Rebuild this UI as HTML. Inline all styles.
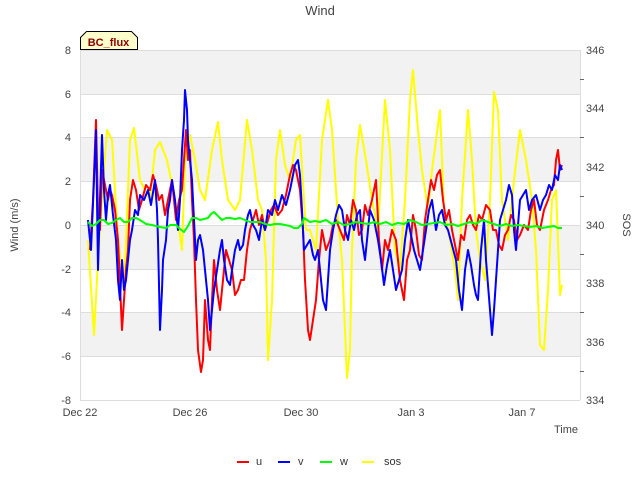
<!DOCTYPE html>
<html><head><meta charset="utf-8"><style>
body{margin:0;background:#fff;}
svg{display:block;font-family:"Liberation Sans","DejaVu Sans",sans-serif;}
</style></head><body>
<svg width="640" height="480" viewBox="0 0 640 480" xmlns="http://www.w3.org/2000/svg">
<rect width="640" height="480" fill="#fff"/>
<text x="320" y="15" font-size="13" fill="#444" text-anchor="middle">Wind</text>
<!-- bands -->
<rect x="80" y="50" width="500" height="44" fill="#f2f2f2"/>
<rect x="80" y="137" width="500" height="44" fill="#f2f2f2"/>
<rect x="80" y="225" width="500" height="44" fill="#f2f2f2"/>
<rect x="80" y="312" width="500" height="44" fill="#f2f2f2"/>
<g stroke="#ddd" stroke-width="1">
<line x1="80" y1="50.5" x2="580" y2="50.5"/><line x1="80" y1="94.5" x2="580" y2="94.5"/>
<line x1="80" y1="137.5" x2="580" y2="137.5"/><line x1="80" y1="181.5" x2="580" y2="181.5"/>
<line x1="80" y1="225.5" x2="580" y2="225.5"/><line x1="80" y1="269.5" x2="580" y2="269.5"/>
<line x1="80" y1="312.5" x2="580" y2="312.5"/><line x1="80" y1="356.5" x2="580" y2="356.5"/>
<line x1="80.5" y1="50" x2="80.5" y2="400"/><line x1="580.5" y1="50" x2="580.5" y2="400"/>
<line x1="80" y1="400.5" x2="580" y2="400.5"/>
</g>
<g font-size="11" fill="#444" text-anchor="end">
<text x="71" y="54">8</text><text x="71" y="98">6</text><text x="71" y="141">4</text><text x="71" y="185">2</text>
<text x="71" y="229">0</text><text x="71" y="273">-2</text><text x="71" y="316">-4</text><text x="71" y="360">-6</text><text x="71" y="404">-8</text>
</g>
<g font-size="11" fill="#444">
<text x="586" y="54">346</text><text x="586" y="112">344</text><text x="586" y="171">342</text><text x="586" y="229">340</text>
<text x="586" y="287">338</text><text x="586" y="346">336</text><text x="586" y="404">334</text>
</g>
<g stroke="#666"><line x1="580" y1="79.5" x2="584" y2="79.5"/><line x1="580" y1="137.5" x2="584" y2="137.5"/><line x1="580" y1="196.5" x2="584" y2="196.5"/><line x1="580" y1="254.5" x2="584" y2="254.5"/><line x1="580" y1="312.5" x2="584" y2="312.5"/><line x1="580" y1="371.5" x2="584" y2="371.5"/></g>
<g font-size="11" fill="#444" text-anchor="middle">
<text x="80" y="416">Dec 22</text><text x="190" y="416">Dec 26</text><text x="301" y="416">Dec 30</text><text x="411" y="416">Jan 3</text><text x="522" y="416">Jan 7</text>
</g>
<text x="578" y="433" font-size="11" fill="#444" text-anchor="end">Time</text>
<text x="18" y="225" font-size="11" fill="#444" text-anchor="middle" transform="rotate(-90 18 225)">Wind (m/s)</text>
<text x="623" y="225" font-size="11" fill="#444" text-anchor="middle" transform="rotate(90 623 225)">SOS</text>
<g fill="none" stroke-width="2" stroke-linejoin="round">
<polyline stroke="#ffff00" points="88,240 94,335 98,260 104,170 107,130 112,140 118,240 124,290 130,140 134,128 140,180 150,200 155,150 160,142 167,160 175,200 182,250 185,160 190,135 195,160 200,190 205,200 212,150 218,122 222,160 228,200 235,210 240,200 247,120 252,150 258,200 262,210 266,260 268,360 272,300 276,160 280,130 285,165 290,180 296,140 300,135 304,200 306,230 310,230 316,250 322,140 328,100 332,130 338,220 342,260 347,378 350,350 352,250 356,160 360,125 366,160 372,200 378,230 385,100 390,150 395,250 400,270 405,200 410,100 413,70 418,130 422,170 428,210 432,170 436,140 440,110 444,210 450,240 455,270 458,300 462,200 468,110 472,160 476,230 480,260 485,280 490,200 494,92 498,110 502,200 508,240 514,180 520,130 526,160 532,200 536,250 540,345 544,350 548,290 552,200 556,190 560,295 562,285"/>
<polyline stroke="#ff0000" points="90,250 93,200 96,120 98,210 100,230 102,170 104,180 108,200 110,190 112,195 115,210 118,240 122,330 124,300 126,270 128,250 130,200 133,180 136,190 139,210 142,200 146,185 150,190 153,175 156,185 159,200 162,195 165,215 168,200 172,180 176,220 179,200 182,190 186,130 188,160 190,150 192,200 194,240 196,300 198,350 201,372 203,360 205,300 208,340 210,350 212,300 214,260 217,290 220,310 223,280 226,250 229,260 232,270 235,295 238,290 241,280 244,280 247,250 250,230 253,220 256,210 259,225 262,215 265,230 268,220 271,210 274,205 278,215 282,210 286,195 290,175 293,165 296,170 298,180 300,190 303,230 305,280 308,330 310,340 313,320 316,300 319,260 322,230 326,250 330,240 333,225 336,220 340,230 344,240 347,215 350,225 353,200 356,210 359,235 362,230 365,205 368,215 372,200 376,180 379,240 382,270 385,240 388,250 392,230 396,240 400,280 404,300 407,260 410,250 413,215 416,230 419,255 422,260 425,220 428,200 431,180 434,190 437,175 440,170 443,200 446,220 449,210 452,230 455,245 458,260 461,235 464,240 467,220 470,215 473,225 476,230 479,215 482,220 486,205 490,210 493,230 496,230 499,245 502,250 505,235 508,230 511,215 514,220 517,240 520,235 524,225 528,230 531,210 534,200 537,225 540,230 544,210 548,200 551,190 554,185 556,160 558,150 560,170 562,165"/>
<polyline stroke="#0000ff" points="88,220 91,250 94,180 96,130 97,200 98,270 100,200 102,135 104,190 106,220 108,195 110,185 113,215 116,240 118,280 120,300 122,260 124,290 126,280 128,260 130,240 132,230 135,210 138,215 140,195 144,200 148,190 151,205 155,180 157,210 158,240 160,330 162,290 163,260 166,240 168,210 170,200 172,180 175,200 178,230 180,200 182,150 184,120 185,90 187,110 188,140 190,160 192,180 194,220 196,260 198,240 200,235 203,250 205,270 208,300 210,330 212,310 214,290 217,270 220,250 222,240 224,260 227,280 230,285 232,270 235,250 238,240 240,250 243,245 245,230 248,215 250,210 253,225 256,230 259,240 262,220 265,230 268,210 272,215 275,200 278,210 282,195 286,205 290,190 293,175 295,165 298,160 300,175 302,210 304,250 307,245 310,240 313,255 315,260 318,250 320,270 323,300 326,310 328,280 330,250 333,230 336,215 339,205 342,210 345,230 348,240 351,220 354,230 357,215 360,210 362,240 365,260 368,230 370,210 374,220 378,240 381,260 384,285 387,265 390,250 393,270 396,290 399,280 402,270 405,240 408,220 411,235 414,250 417,260 420,270 423,250 426,230 429,210 432,200 434,215 436,230 439,215 442,210 445,225 448,230 452,245 456,260 459,290 462,310 465,270 468,250 471,265 474,285 476,295 478,300 481,250 484,220 486,260 488,285 490,310 492,335 494,310 496,280 498,250 500,220 503,210 506,200 509,185 512,195 514,230 516,250 518,225 520,200 523,195 526,190 529,210 532,200 536,195 540,210 543,200 546,195 549,185 552,190 555,175 558,180 560,165 562,170"/>
<polyline stroke="#00ff00" points="88,222 92,226 96,224 100,220 104,220 108,224 112,223 116,220 120,218 124,222 128,222 132,218 136,218 140,220 146,224 152,225 156,226 160,227 166,228 170,225 176,225 180,229 184,232 188,226 192,218 196,218 200,220 204,219 208,218 211,214 214,212 218,216 222,220 226,218 230,218 235,219 240,218 245,220 250,222 255,222 260,222 265,224 270,225 275,224 280,224 285,225 290,226 294,228 298,228 302,224 304,218 307,220 310,222 315,221 320,222 326,220 332,224 338,222 344,225 350,224 356,222 362,223 368,224 374,222 380,224 386,222 392,225 398,223 404,224 410,220 416,222 422,225 428,224 434,223 440,222 446,225 452,224 458,226 464,224 470,222 476,224 482,220 488,222 494,224 500,226 506,224 512,226 518,225 524,226 530,227 536,226 542,228 548,227 554,226 558,228 562,228"/>
</g>
<!-- BC_flux label -->
<path d="M80.5,49.5 V37.5 L86.5,31.5 H131.5 L137.5,37.5 V49.5 Z" fill="#ffffcc" stroke="#000" stroke-width="1"/>
<text x="108.5" y="46" font-size="11" font-weight="bold" fill="#8b0000" text-anchor="middle">BC_flux</text>
<!-- legend -->
<g stroke-width="2"><line x1="237" y1="462" x2="249" y2="462" stroke="#ff0000"/><line x1="278" y1="462" x2="290" y2="462" stroke="#0000ff"/><line x1="320" y1="462" x2="332" y2="462" stroke="#00ff00"/><line x1="362" y1="462" x2="374" y2="462" stroke="#ffff00"/></g>
<g font-size="11" fill="#333"><text x="256" y="465">u</text><text x="298" y="465">v</text><text x="340" y="465">w</text><text x="384" y="465">sos</text></g>
</svg>
</body></html>
